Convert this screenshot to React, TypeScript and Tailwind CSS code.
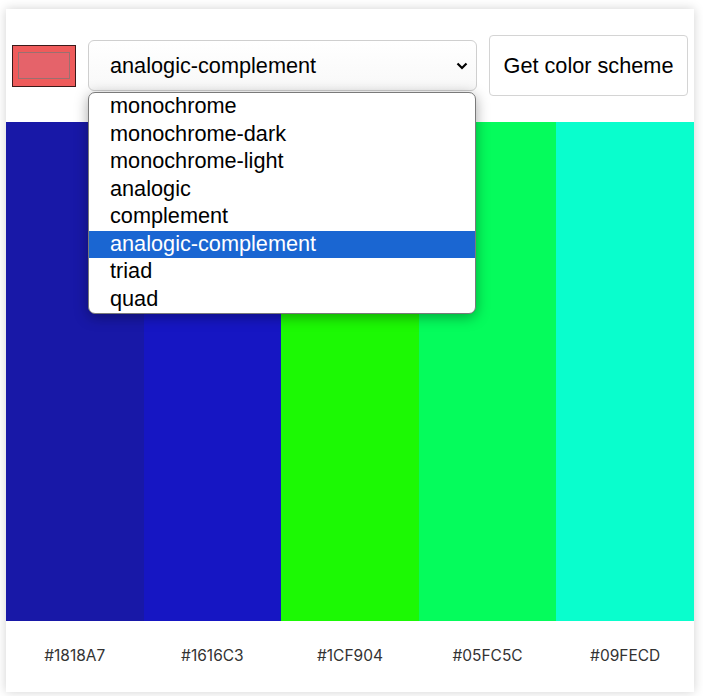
const colors = ["#1818A7", "#1616C3", "#1CF904", "#05FC5C", "#09FECD"];

const schemes = [
  "monochrome",
  "monochrome-dark",
  "monochrome-light",
  "analogic",
  "complement",
  "analogic-complement",
  "triad",
  "quad",
];

export default function App() {
  return (
    <div className="min-h-[696px] w-[703px] bg-white pt-[9px] pl-[6px]">
      <div className="relative w-[688px] h-[683px] bg-white shadow-[0_0_10px_rgba(0,0,0,0.18)] flex flex-col">
        {/* Controls */}
        <div className="h-[113px] flex items-center gap-[12px] px-[6px] font-['Liberation_Sans',Arial,sans-serif] text-[21.7px] text-black">
          <div className="w-[64px] h-[42px] border border-[#3b1a1a] bg-[#EF5B5B] flex items-center justify-center">
            <div className="w-[52px] h-[27px] border border-[#9a7070] bg-[#E5636A]" />
          </div>
          <div className="w-[389px] h-[51px] rounded-[6px] border border-[#cfcfcf] bg-gradient-to-b from-white to-[#f8f8f8] flex items-center justify-between pl-[21px] pr-[8px]">
            <span className="pt-[1px]">analogic-complement</span>
            <svg width="12" height="8" viewBox="0 0 12 8" fill="none">
              <path d="M1.5 1.5 L6 6 L10.5 1.5" stroke="#000" strokeWidth="2.2" />
            </svg>
          </div>
          <button className="w-[199px] h-[61px] rounded-[4px] border border-[#d4d4d4] bg-white text-[21.7px] pt-[1px]">
            Get color scheme
          </button>
        </div>

        {/* Colour columns */}
        <div className="flex h-[499px]">
          {colors.map((c) => (
            <div key={c} className="flex-1" style={{ backgroundColor: c }} />
          ))}
        </div>
        <div className="flex flex-1 font-['Inter',sans-serif] text-[15.5px] text-[#333]">
          {colors.map((c) => (
            <div key={c} className="flex-1 flex items-center justify-center pb-[1px]">
              {c}
            </div>
          ))}
        </div>

        {/* Open dropdown list */}
        <div className="absolute left-[82px] top-[83px] w-[388px] bg-white rounded-[7px] border border-[#7a7a7a] shadow-[0_3px_14px_rgba(0,0,0,0.35)] overflow-hidden font-['Liberation_Sans',Arial,sans-serif] text-[21.7px] leading-[26px]">
          {schemes.map((s) => (
            <div
              key={s}
              className={
                s === "analogic-complement"
                  ? "h-[27.5px] pl-[21px] bg-[#1A66D2] text-white"
                  : "h-[27.5px] pl-[21px] text-black"
              }
            >
              {s}
            </div>
          ))}
        </div>
      </div>
    </div>
  );
}
